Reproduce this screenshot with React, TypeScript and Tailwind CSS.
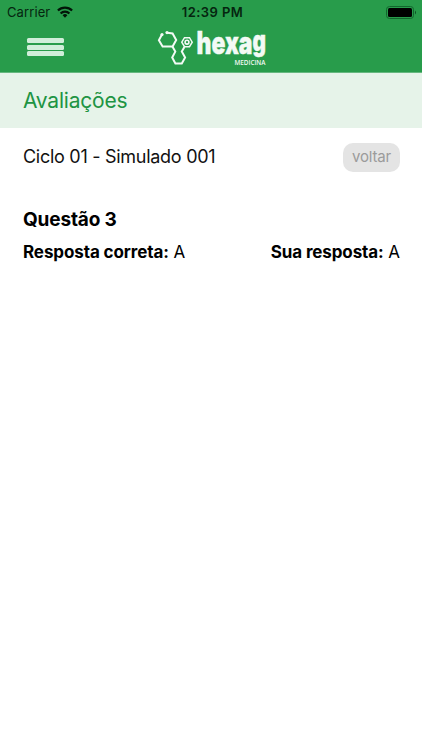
function StatusBar() {
  return (
    <div className="flex h-6 items-center justify-between text-[13px] leading-6 text-[#05250f]">
      <div className="flex flex-1 items-center gap-[7px] pl-[7px]">
        <span className="tracking-[0.1px]">Carrier</span>
        <svg width="16" height="12" viewBox="0 0 16 12" fill="none" stroke="#021508" strokeWidth="2.2">
          <path d="M0.9 4.5A10 10 0 0 1 15.1 4.5" />
          <path d="M3.6 7.4A6.2 6.2 0 0 1 12.4 7.4" />
          <path d="M8 11.8L5.6 9.3A3.4 3.4 0 0 1 10.4 9.3Z" fill="#021508" stroke="none" />
        </svg>
      </div>
      <span className="pl-[1px] font-semibold tracking-[0.45px]">12:39 PM</span>
      <div className="flex flex-1 justify-end pr-[5px]">
        <svg width="31" height="13" viewBox="0 0 31 13">
          <rect x="0.5" y="0.5" width="27" height="12" rx="3" fill="none" stroke="#12662d" />
          <rect x="2" y="2" width="24" height="9" rx="1.5" fill="#000" />
          <path d="M29 4.5Q31 6.5 29 8.5Z" fill="#0d4f22" />
        </svg>
      </div>
    </div>
  );
}

function Logo() {
  return (
    <svg width="114" height="48" viewBox="155 24 114 48" className="overflow-visible" fill="none" stroke="#f3faf5" strokeWidth="2">
      <path d="M161.7 35L158.9 40.2L162.6 46.4H172.6L176.2 40L172.6 33.4L167.3 32.8" />
      <path d="M172.4 46.4L175.3 51.6L172.2 57.5L175.4 63.4H181.8L185.1 57.5L181.8 51.6L184.4 47" />
      <path d="M181.8 42.2L184.5 37.7H189.5L192.2 42.2L189.5 46.7H184.5Z" strokeWidth="1.5" />
      <circle cx="187" cy="42.2" r="1.9" strokeWidth="1.6" />
      <circle cx="162" cy="34.6" r="1.6" fill="#f3faf5" stroke="none" />
      <circle cx="167" cy="32.6" r="1.6" fill="#f3faf5" stroke="none" />
      <text x="196.5" y="53.6" fontSize="31" fontWeight="900" fontFamily="Inter, sans-serif" textLength="69.5" lengthAdjust="spacingAndGlyphs" fill="#f3faf5" strokeWidth="0.4">hexa<tspan fontSize="28" dy="-2.3">g</tspan></text>
      <text x="234.5" y="64.7" fontSize="7.5" fontWeight="600" fontFamily="Open Sans, sans-serif" textLength="31" lengthAdjust="spacingAndGlyphs" fill="#f3faf5" stroke="none">MEDICINA</text>
    </svg>
  );
}

export default function App() {
  return (
    <div className="min-h-[750px] bg-white font-['Inter',sans-serif] text-black">
      <header className="h-[73px] border-b border-[#65b77f] bg-[#289c4b]">
        <StatusBar />
        <div className="flex items-start">
          <button aria-label="Menu" className="ml-[27px] mt-[14px] flex w-[37px] flex-col gap-[1.5px]">
            <span className="h-[5px] rounded-[1.5px] bg-[#d1eeda]" />
            <span className="h-[5px] rounded-[1.5px] bg-[#d1eeda]" />
            <span className="h-[5px] rounded-[1.5px] bg-[#d1eeda]" />
          </button>
          <div className="ml-[91px]">
            <Logo />
          </div>
        </div>
      </header>
      <h1 className="flex h-[55px] items-center bg-[#e6f3e9] pl-[23px] text-[21px] tracking-[-0.2px] text-[#209443]">
        Avaliações
      </h1>
      <main className="pr-[22px] pl-[23px]">
        <div className="flex h-[58px] items-center justify-between">
          <h2 className="pb-[1px] text-[18px] tracking-[-0.28px] text-[#111]">Ciclo 01 - Simulado 001</h2>
          <button className="h-[29px] w-[57px] rounded-[10px] bg-[#e4e4e4] text-[15px] tracking-[-0.2px] text-[#9b9b9b]">voltar</button>
        </div>
        <h3 className="mt-[20px] text-[19px] leading-7 font-bold tracking-[-0.15px]">Questão 3</h3>
        <div className="mt-[6px] flex justify-between text-[17px] leading-6 tracking-[-0.1px]">
          <p><b>Resposta correta:</b> A</p>
          <p><b>Sua resposta:</b> A</p>
        </div>
      </main>
    </div>
  );
}
